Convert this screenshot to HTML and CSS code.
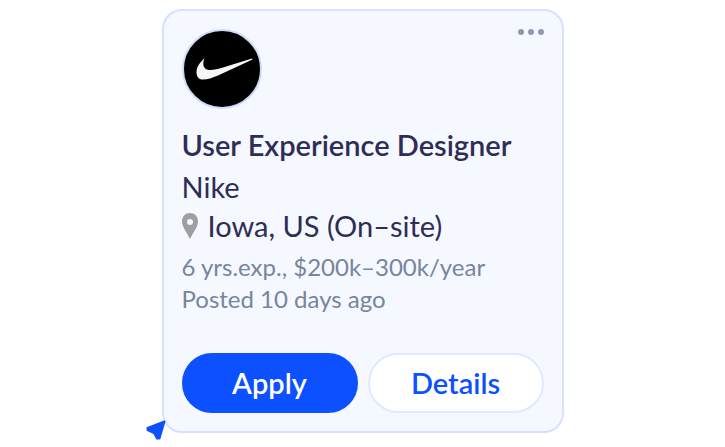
FILE: index.html
```html
<!DOCTYPE html>
<html lang="en">
<head>
  <meta charset="UTF-8">
  <meta name="viewport" content="width=device-width, initial-scale=1.0">
  <title>Job card</title>
  <link rel="stylesheet" href="styles.css">
</head>
<body>
  <article class="job-card">
    <header class="card-top">
      <svg class="logo" viewBox="0 0 80 80" role="img" aria-label="Nike logo">
        <circle cx="40" cy="40" r="39" fill="#000" stroke="#d0dbfa" stroke-width="2"/>
        <path fill="#f6f6f6" d="M22.500 29C20.500 34 20.500 40.500 27 41C31 41.300 36 40 41 38.500L70 29.500L70.500 30.500L36 46.500C30 49 24 51 20 50.500C16 50 14.500 47 14.500 43C14.500 38 18 33.500 22.500 29Z"/>
      </svg>
      <button class="more" type="button" aria-label="More options">
        <svg width="26" height="6" viewBox="0 0 26 6">
          <circle cx="3" cy="3" r="3"/>
          <circle cx="13" cy="3" r="3"/>
          <circle cx="23" cy="3" r="3"/>
        </svg>
      </button>
    </header>

    <h1 class="title">User Experience Designer</h1>
    <p class="company">Nike</p>
    <p class="location">
      <svg class="pin" width="16" height="26" viewBox="0 0 16 26" aria-hidden="true">
        <path fill-rule="evenodd" d="M8 0C3.500 0 0 3.500 0 8.200C0 14 5 19.500 8 26C11 19.500 16 14 16 8.200C16 3.500 12.500 0 8 0ZM8 6A3 3 0 1 1 8 12A3 3 0 1 1 8 6Z"/>
      </svg>
      Iowa, US (On–site)
    </p>

    <div class="meta">
      <p>6 yrs.exp., $200k–300k/year</p>
      <p>Posted 10 days ago</p>
    </div>

    <div class="actions">
      <button class="btn btn-apply" type="button">Apply</button>
      <button class="btn btn-details" type="button">Details</button>
    </div>

    <!-- pointer on the card's corner -->
    <svg class="cursor" width="20" height="20" viewBox="0 0 20 20" aria-hidden="true">
      <path d="M18.500 1.500L13.500 18.500L11 18.500L8 13L1.500 10L1.500 8Z"/>
    </svg>
  </article>
</body>
</html>
```

FILE: styles.css
```css
* {
  box-sizing: border-box;
  margin: 0;
  padding: 0;
}

body {
  padding: 9px 16px;
  background: #fff;
  color: #2e2d55;
  font-family: Lato, "Liberation Sans", sans-serif;
}

.job-card {
  position: relative;
  max-width: 402px;
  margin: 0 auto;
  padding: 18px;
  background: #f5f8ff;
  border: 2px solid #d6e1ff;
  border-radius: 20px;
}

.card-top {
  display: flex;
  justify-content: space-between;
  align-items: flex-start;
  margin-bottom: 16px;
}

.logo {
  width: 80px;
  height: 80px;
}

.more {
  display: flex;
  background: none;
  border: 0;
  fill: #8f99ad;
  cursor: pointer;
}

.title,
.company,
.location {
  font-size: 29px;
  line-height: 40px;
  font-weight: 400;
}

.title {
  margin-bottom: 2px;
  font-weight: 600;
}

.location {
  display: flex;
  align-items: center;
  gap: 10px;
  line-height: 38px;
}

.pin {
  fill: #9f9f9f;
}

.meta {
  margin-top: 6px;
  color: #77859d;
  font-size: 24px;
  line-height: 32px;
}

.actions {
  display: grid;
  grid-template-columns: 1fr 1fr;
  gap: 10px;
  margin-top: 38px;
}

.btn {
  height: 60px;
  padding-bottom: 2px;
  border: 2px solid #0d50ff;
  border-radius: 30px;
  font: 600 29px Lato, "Liberation Sans", sans-serif;
  cursor: pointer;
}

.btn-apply {
  background: #0d50ff;
  color: #fff;
}

.btn-details {
  background: #fff;
  border-color: #e0e9ff;
  color: #0d50ff;
}

.cursor {
  position: absolute;
  left: -18px;
  bottom: -9px;
  fill: #0d50ff;
  stroke: #0d50ff;
  stroke-width: 2;
  stroke-linejoin: round;
}
```
